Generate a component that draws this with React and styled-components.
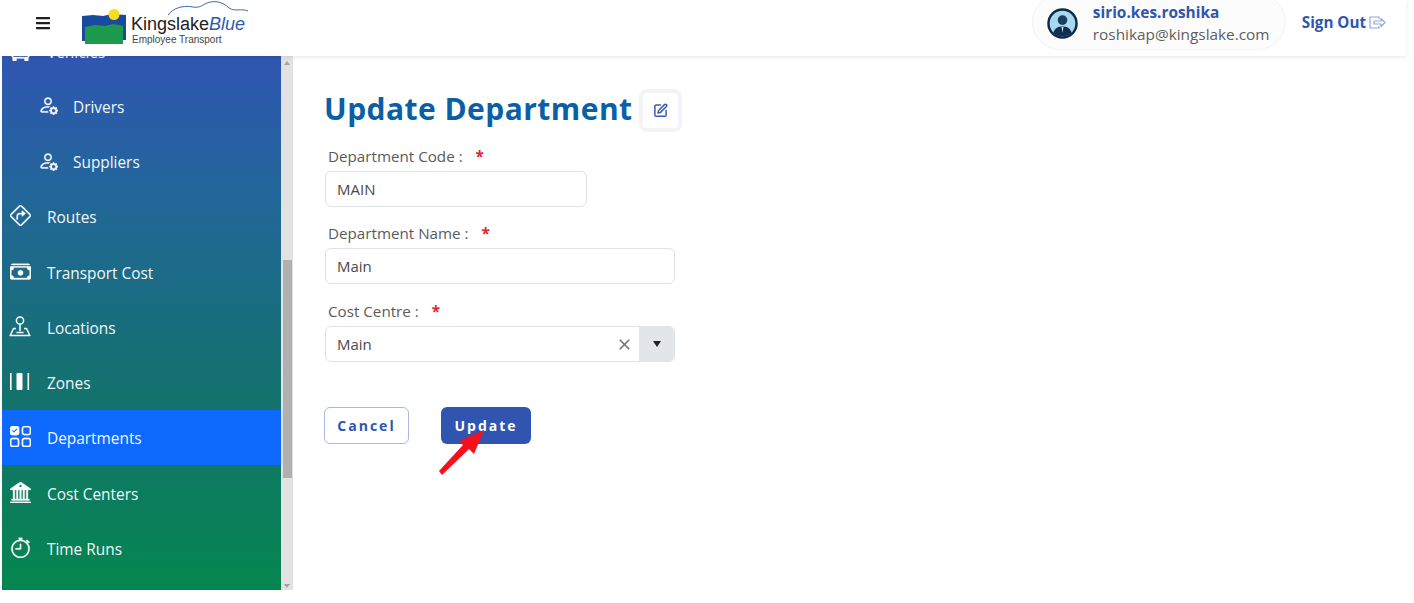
import styled, { createGlobalStyle } from 'styled-components';
import {
    BsPersonGear, BsSignTurnRight, BsCashStack, BsUiChecksGrid, BsBank2, BsStopwatch, BsBusFront,
} from 'react-icons/bs';
import { FaBars } from 'react-icons/fa';
import { LuSquarePen, LuX } from 'react-icons/lu';

const GlobalStyle = createGlobalStyle`
    html, body {
        margin: 0;
        padding: 0;
        background: #fff;
        font-family: "Open Sans", "Noto Sans", sans-serif;
    }
    * { box-sizing: border-box; }
`;

const LocationIcon = () => (
    <svg width="22" height="22" viewBox="0 0 22 22" fill="none" stroke="currentColor" strokeWidth="1.5">
        <circle cx="11" cy="5.5" r="3.6" />
        <path d="M11 9.2v7" />
        <path d="M7 13.5H4.5L1.2 20.5h19.6l-3.3-7H15" strokeLinejoin="round" />
        <path d="M7.5 17.5h7" />
    </svg>
);

const ZonesIcon = () => (
    <svg width="22" height="20" viewBox="0 0 22 20" fill="currentColor">
        <rect x="1" y="1" width="1.6" height="17" />
        <rect x="7.5" y="1" width="6" height="17" rx="1.2" />
        <rect x="18.5" y="1" width="1.6" height="17" />
    </svg>
);

const NAV_ITEMS = [
    { label: 'Vehicles', Icon: BsBusFront },
    { label: 'Drivers', Icon: BsPersonGear, sub: true },
    { label: 'Suppliers', Icon: BsPersonGear, sub: true },
    { label: 'Routes', Icon: BsSignTurnRight },
    { label: 'Transport Cost', Icon: BsCashStack },
    { label: 'Locations', Icon: LocationIcon, raw: true },
    { label: 'Zones', Icon: ZonesIcon, raw: true },
    { label: 'Departments', Icon: BsUiChecksGrid, active: true },
    { label: 'Cost Centers', Icon: BsBank2 },
    { label: 'Time Runs', Icon: BsStopwatch },
];

const App = () => {
    return (
        <>
            <GlobalStyle />
            <Page>
                <Header>
                    <MenuButton><FaBars size={16} /></MenuButton>
                    <Logo>
                        <svg width="46" height="37" viewBox="0 0 46 37">
                            <path d="M0 7 L11 6 L21 7 L30 5 L44 6 L44 31 L0 32 Z" fill="#1a4aa0" />
                            <path d="M3 18 L13 16 L23 17 L31 15 L41 17 L41 35 L3 35 Z" fill="#1d9a4d" />
                            <circle cx="32" cy="5.5" r="5.5" fill="#f5dc1e" />
                        </svg>
                        <LogoText>
                            <LogoName>Kingslake<em>Blue</em></LogoName>
                            <LogoTag>Employee Transport</LogoTag>
                        </LogoText>
                        <LogoSwoosh width="82" height="20" viewBox="0 0 82 20" fill="none" stroke="#3f68b5" strokeWidth="1">
                            <path d="M1 15 C 6 8, 16 5, 26 7 C 32 8, 34 6, 40 3 C 48 0, 56 2, 62 8 C 68 12, 74 8, 81 11" />
                        </LogoSwoosh>
                    </Logo>
                    <HeaderRight>
                        <UserPill>
                            <svg width="31" height="31" viewBox="0 0 32 32">
                                <circle cx="16" cy="16" r="14.5" fill="#a9d8ee" stroke="#0d2a4d" strokeWidth="2.5" />
                                <circle cx="16" cy="12.5" r="5" fill="#1b3d5e" />
                                <path d="M6.5 26 C 8 20, 12 19, 16 19 C 20 19, 24 20, 25.5 26 C 20 30, 12 30, 6.5 26 Z" fill="#0f2f50" />
                                <path d="M15 19.5h2l-1 6z" fill="#cfe9f5" />
                            </svg>
                            <UserText>
                                <UserName>sirio.kes.roshika</UserName>
                                <UserEmail>roshikap@kingslake.com</UserEmail>
                            </UserText>
                        </UserPill>
                        <SignOut>
                            Sign Out
                            <svg width="17" height="13" viewBox="0 0 17 13" fill="none" stroke="#8fa6da" strokeWidth="1.2">
                                <path d="M10 3V1H1v11h9v-2" />
                                <path d="M5 5h7V2.5l4 4-4 4V8H5z" strokeLinejoin="round" />
                            </svg>
                        </SignOut>
                    </HeaderRight>
                </Header>
                <Body>
                    <Sidebar>
                        <NavList>
                            {NAV_ITEMS.map(({ label, Icon, sub, active, raw }) => (
                                <NavRow key={label} $sub={sub} $active={active}>
                                    <NavIcon $bold={!raw}>
                                        {raw ? <Icon /> : <Icon size={sub ? 20 : 21} />}
                                    </NavIcon>
                                    {label}
                                </NavRow>
                            ))}
                        </NavList>
                    </Sidebar>
                    <ScrollTrack>
                        <ScrollArrow />
                        <ScrollThumb />
                        <ScrollArrow $down />
                    </ScrollTrack>
                    <Main>
                        <TitleRow>
                            <Title>Update Department</Title>
                            <EditBadge><LuSquarePen size={15} strokeWidth={2.4} /></EditBadge>
                        </TitleRow>
                        <Field>
                            <Label>Department Code : <Star>*</Star></Label>
                            <TextBox $width="262px">MAIN</TextBox>
                        </Field>
                        <Field>
                            <Label>Department Name : <Star>*</Star></Label>
                            <TextBox $width="350px">Main</TextBox>
                        </Field>
                        <Field>
                            <Label>Cost Centre : <Star>*</Star></Label>
                            <SelectBox>
                                <SelectValue>
                                    Main
                                    <ClearIcon><LuX size={17} strokeWidth={2.4} /></ClearIcon>
                                </SelectValue>
                                <SelectCaret />
                            </SelectBox>
                        </Field>
                        <Actions>
                            <CancelButton>Cancel</CancelButton>
                            <UpdateWrap>
                                <UpdateButton>Update</UpdateButton>
                                <PointerArrow width="48" height="46" viewBox="0 0 48 46">
                                    <path d="M0 41 L24 15 L20 11 L45 0 L35 24 L30 19 L3 45 Z" fill="#f5101c" />
                                </PointerArrow>
                            </UpdateWrap>
                        </Actions>
                    </Main>
                </Body>
            </Page>
        </>
    );
};

export default App;

const Page = styled.div`
    width: 1414px;
    height: 603px;
    overflow: hidden;
    background: #fff;
    display: flex;
    flex-direction: column;
`;

const Header = styled.header`
    position: relative;
    z-index: 2;
    width: 1406px;
    height: 56px;
    flex: none;
    display: flex;
    align-items: center;
    padding: 0 20px 0 35px;
    background: #fff;
    overflow: hidden;
    box-shadow: 0 1px 4px rgba(0, 0, 0, 0.1);
`;

const MenuButton = styled.div`
    display: flex;
    color: #1f1f1f;
    margin-top: -11px;
`;

const Logo = styled.div`
    position: relative;
    display: flex;
    align-items: flex-start;
    gap: 3px;
    margin-left: 31px;
    margin-top: -1px;
`;

const LogoText = styled.div`
    display: flex;
    flex-direction: column;
    margin-top: 4px;
    font-family: "Liberation Sans", Arial, sans-serif;
`;

const LogoName = styled.div`
    font-size: 18px;
    line-height: 22px;
    color: #222;
    white-space: nowrap;
    em {
        color: #2c5aad;
        font-style: italic;
    }
`;

const LogoTag = styled.div`
    font-size: 10px;
    line-height: 10px;
    margin-left: 1px;
    color: #444;
    white-space: nowrap;
`;

const LogoSwoosh = styled.svg`
    position: absolute;
    left: 85px;
    top: -9px;
`;

const HeaderRight = styled.div`
    margin-left: auto;
    align-self: flex-start;
    height: 50px;
    display: flex;
    align-items: center;
    gap: 16px;
`;

const UserPill = styled.div`
    width: 254px;
    height: 56px;
    margin-top: -6px;
    padding: 2px 0 0 14px;
    display: flex;
    align-items: center;
    gap: 15px;
    background: #fcfcfc;
    border: 1px solid #f3f3f3;
    border-radius: 28px;
`;

const UserText = styled.div`
    display: flex;
    flex-direction: column;
    gap: 1px;
`;

const UserName = styled.div`
    font-size: 15.4px;
    line-height: 21px;
    font-weight: 700;
    color: #2f55b0;
`;

const UserEmail = styled.div`
    font-size: 15.35px;
    line-height: 21px;
    color: #5e5e5e;
`;

const SignOut = styled.div`
    display: flex;
    align-items: center;
    gap: 3px;
    margin-bottom: 6px;
    font-size: 15.2px;
    font-weight: 700;
    color: #2f55b0;
    white-space: nowrap;
`;

const Body = styled.div`
    height: 534px;
    flex: none;
    display: flex;
    padding-left: 2px;
`;

const Sidebar = styled.nav`
    width: 279px;
    height: 100%;
    flex: none;
    overflow: hidden;
    background: linear-gradient(180deg, #3056b2 0%, #22669a 25%, #14726f 62%, #05864f 100%);
`;

const NavList = styled.div`
    margin-top: -33px;
    display: flex;
    flex-direction: column;
`;

const NavRow = styled.div`
    height: 55.25px;
    flex: none;
    padding-top: 3px;
    display: flex;
    align-items: center;
    gap: ${props => (props.$sub ? '14px' : '16px')};
    padding-left: ${props => (props.$sub ? '35px' : '7px')};
    font-size: 15.4px;
    color: #f2f6f8;
    background: ${props => (props.$active ? '#0d69ff' : 'transparent')};
    white-space: nowrap;
`;

const NavIcon = styled.span`
    width: 22px;
    margin-top: -4px;
    display: flex;
    justify-content: center;
    color: #fff;
    svg path {
        ${props => (props.$bold ? 'stroke: currentColor; stroke-width: 0.25px;' : '')}
    }
`;

const ScrollTrack = styled.div`
    width: 12px;
    height: 100%;
    flex: none;
    display: flex;
    flex-direction: column;
    align-items: center;
    background: #e2e2e2;
`;

const ScrollArrow = styled.div`
    width: 0;
    height: 0;
    margin: ${props => (props.$down ? 'auto 0 2px' : '5px 0 0')};
    border-left: 3px solid transparent;
    border-right: 3px solid transparent;
    border-${props => (props.$down ? 'top' : 'bottom')}: 4px solid #a3a3a3;
`;

const ScrollThumb = styled.div`
    width: 9px;
    height: 218px;
    margin-top: 195px;
    background: #b0b0b0;
`;

const Main = styled.main`
    flex: 1;
    padding: 30px 0 0 31px;
    display: flex;
    flex-direction: column;
    align-items: flex-start;
`;

const TitleRow = styled.div`
    display: flex;
    align-items: center;
    gap: 6px;
    margin-top: 3px;
    height: 42px;
`;

const Title = styled.h1`
    margin: 0 0 4px;
    font-size: 30px;
    font-weight: 700;
    letter-spacing: 0.45px;
    color: #0b5fa6;
    white-space: nowrap;
`;

const EditBadge = styled.div`
    width: 43px;
    height: 43px;
    display: flex;
    align-items: center;
    justify-content: center;
    background: #fff;
    border: 4px solid #f2f3f6;
    border-radius: 8px;
    color: #3a5cb8;
`;

const Field = styled.div`
    display: flex;
    flex-direction: column;
    margin: 15px 0 0 1px;
    & + & {
        margin-top: 16px;
    }
    & + & + & {
        margin-top: 17px;
    }
`;

const Label = styled.label`
    margin-left: 3px;
    height: 25px;
    font-size: 15.2px;
    line-height: 20px;
    color: #5a5a5a;
    white-space: nowrap;
`;

const Star = styled.span`
    margin-left: 9px;
    font-weight: 700;
    color: #e3222f;
`;

const TextBox = styled.div`
    width: ${props => props.$width};
    height: 36px;
    padding: 0 11px;
    display: flex;
    align-items: center;
    font-size: 15px;
    color: #4a4a4a;
    border: 1px solid #dfe2e7;
    border-radius: 6px;
    background: #fff;
`;

const SelectBox = styled.div`
    width: 350px;
    height: 36px;
    display: flex;
    border: 1px solid #dfe2e7;
    border-radius: 6px;
    overflow: hidden;
`;

const SelectValue = styled.div`
    flex: 1;
    padding: 0 6px 0 11px;
    display: flex;
    align-items: center;
    justify-content: space-between;
    font-size: 15px;
    color: #4a4a4a;
`;

const ClearIcon = styled.span`
    display: flex;
    color: #777;
`;

const SelectCaret = styled.div`
    width: 35px;
    display: flex;
    align-items: center;
    justify-content: center;
    background: #e2e5ea;
    &::after {
        content: "";
        border-left: 4.5px solid transparent;
        border-right: 4.5px solid transparent;
        border-top: 6px solid #222;
    }
`;

const Actions = styled.div`
    display: flex;
    align-items: center;
    gap: 32px;
    margin-top: 45px;
`;

const CancelButton = styled.button`
    width: 85px;
    height: 37px;
    padding: 0;
    font-family: inherit;
    font-size: 14px;
    font-weight: 700;
    letter-spacing: 2px;
    color: #2f55b0;
    background: #fff;
    border: 1px solid #a9b8e0;
    border-radius: 6px;
`;

const UpdateWrap = styled.div`
    position: relative;
    display: flex;
`;

const UpdateButton = styled.button`
    width: 90px;
    height: 37px;
    padding: 0;
    font-family: inherit;
    font-size: 14px;
    font-weight: 700;
    letter-spacing: 2px;
    color: #fff;
    background: #2f55b0;
    border: none;
    border-radius: 6px;
`;

const PointerArrow = styled.svg`
    position: absolute;
    left: -2px;
    top: 23px;
`;
